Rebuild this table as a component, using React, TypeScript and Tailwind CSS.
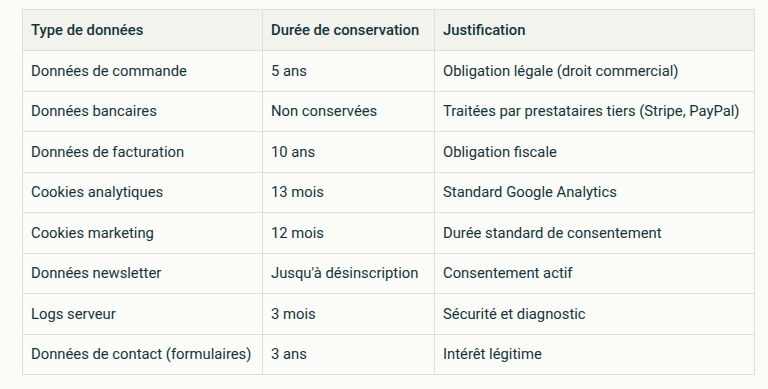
import React from "react";

const rows: [string, string, string][] = [
  ["Données de commande", "5 ans", "Obligation légale (droit commercial)"],
  ["Données bancaires", "Non conservées", "Traitées par prestataires tiers (Stripe, PayPal)"],
  ["Données de facturation", "10 ans", "Obligation fiscale"],
  ["Cookies analytiques", "13 mois", "Standard Google Analytics"],
  ["Cookies marketing", "12 mois", "Durée standard de consentement"],
  ["Données newsletter", "Jusqu'à désinscription", "Consentement actif"],
  ["Logs serveur", "3 mois", "Sécurité et diagnostic"],
  ["Données de contact (formulaires)", "3 ans", "Intérêt légitime"],
];

export default function App() {
  return (
    <div
      className="w-[768px] h-[389px] bg-[#fcfcf9] pt-[9px] pl-[22px] text-[#13343b]"
      style={{ fontFamily: "Roboto, 'Liberation Sans', sans-serif" }}
    >
      <table className="border-collapse text-[14.8px] leading-[22px] table-fixed w-[732px]">
        <colgroup>
          <col className="w-[240px]" />
          <col className="w-[172px]" />
          <col className="w-[320px]" />
        </colgroup>
        <thead>
          <tr className="h-[41px] bg-[#f3f3ee]">
            <th className="border border-[#dededa] px-2 text-left font-medium whitespace-nowrap">Type de données</th>
            <th className="border border-[#dededa] px-2 text-left font-medium whitespace-nowrap">Durée de conservation</th>
            <th className="border border-[#dededa] px-2 text-left font-medium whitespace-nowrap">Justification</th>
          </tr>
        </thead>
        <tbody>
          {rows.map((r, i) => (
            <tr key={i} className="h-[40.5px]">
              {r.map((c, j) => (
                <td key={j} className="border border-[#dededa] px-2 whitespace-nowrap">
                  {c}
                </td>
              ))}
            </tr>
          ))}
        </tbody>
      </table>
    </div>
  );
}
